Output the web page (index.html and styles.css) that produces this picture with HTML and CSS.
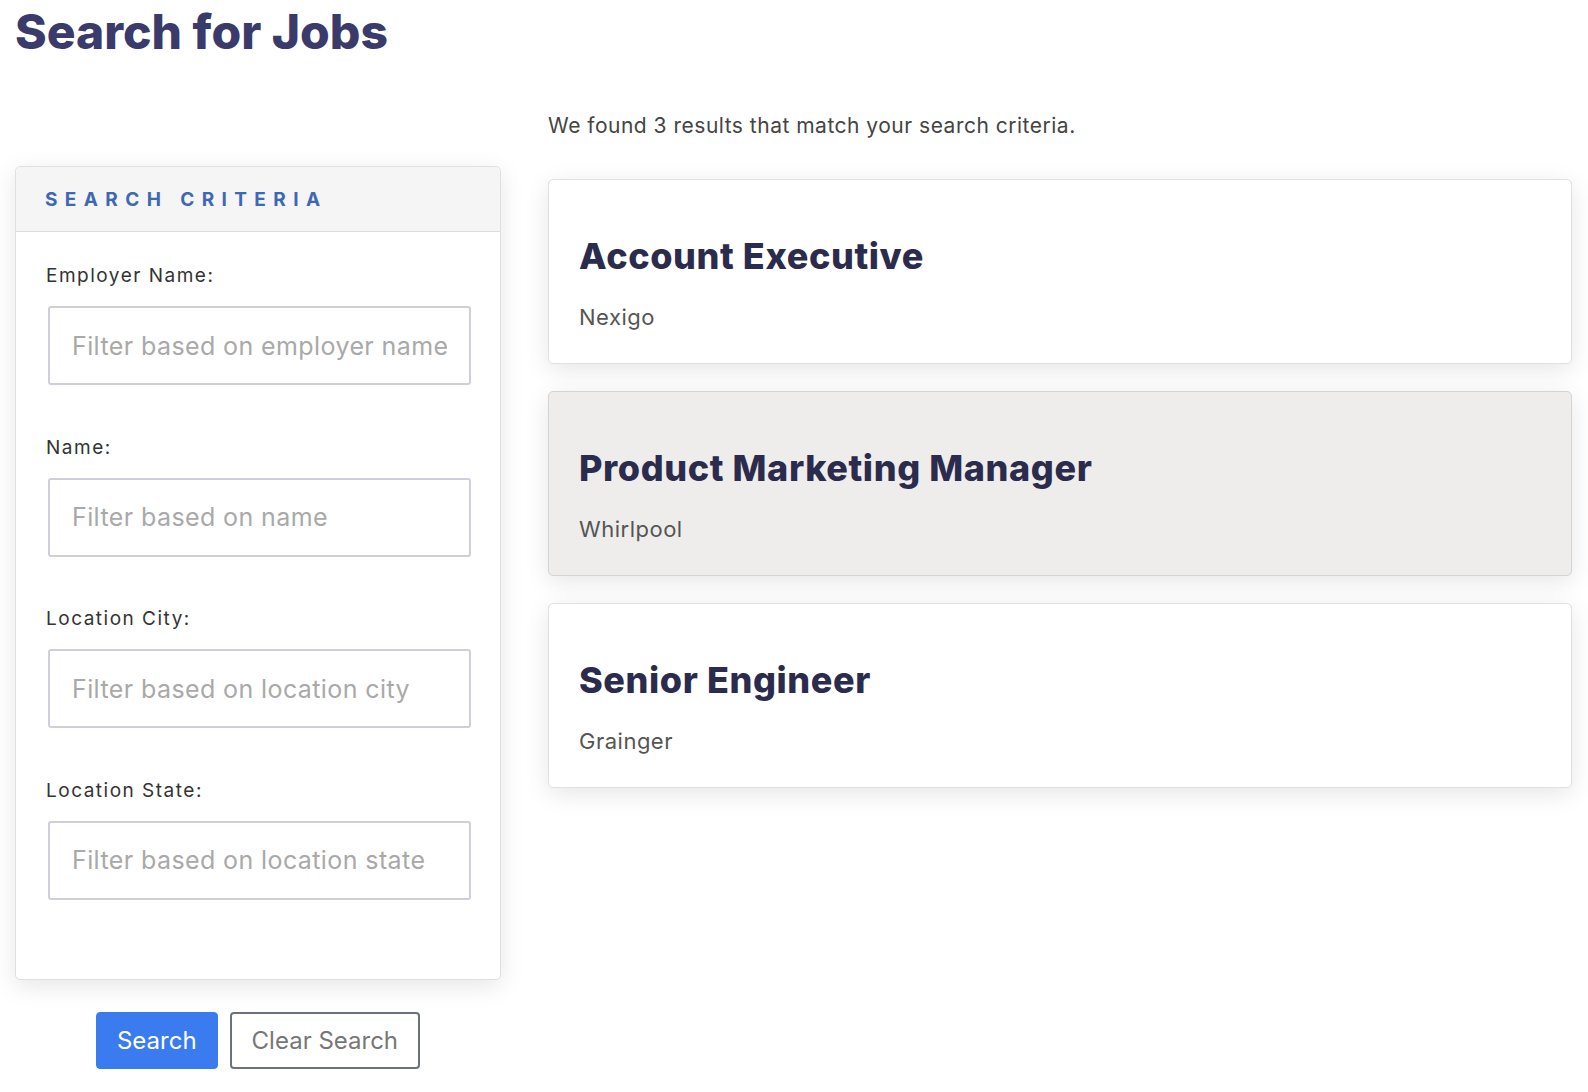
FILE: index.html
```html
<!DOCTYPE html>
<html lang="en">
<head>
  <meta charset="UTF-8">
  <meta name="viewport" content="width=device-width, initial-scale=1.0">
  <link rel="stylesheet" href="styles.css">
  <title>Search for Jobs</title>
</head>
<body>

  <div class="page">
    <h1 class="page-title">Search for Jobs</h1>

    <div class="layout">
      <div class="side">
        <div class="criteria-card">
          <div class="criteria-header">Search Criteria</div>
          <div class="criteria-body">
            <div class="field">
              <label for="employer">Employer Name:</label>
              <input type="text" id="employer" placeholder="Filter based on employer name">
            </div>
            <div class="field">
              <label for="name">Name:</label>
              <input type="text" id="name" placeholder="Filter based on name">
            </div>
            <div class="field">
              <label for="city">Location City:</label>
              <input type="text" id="city" placeholder="Filter based on location city">
            </div>
            <div class="field">
              <label for="state">Location State:</label>
              <input type="text" id="state" placeholder="Filter based on location state">
            </div>
          </div>
        </div>

        <div class="actions">
          <button class="btn btn-primary">Search</button>
          <button class="btn btn-outline">Clear Search</button>
        </div>
      </div>

      <div class="results">
        <p class="results-count">We found 3 results that match your search criteria.</p>

        <div class="job-card">
          <h2 class="job-title">Account Executive</h2>
          <p class="job-company">Nexigo</p>
        </div>

        <div class="job-card active">
          <h2 class="job-title">Product Marketing Manager</h2>
          <p class="job-company">Whirlpool</p>
        </div>

        <div class="job-card">
          <h2 class="job-title">Senior Engineer</h2>
          <p class="job-company">Grainger</p>
        </div>
      </div>
    </div>
  </div>

</body>
</html>
```

FILE: styles.css
```css
body {
  margin: 0;
  background-color: #ffffff;
  font-family: Inter, "Noto Sans", sans-serif;
  color: #333;
}

.page {
  padding: 0 16px 0 15px;
}

.page-title {
  margin: 0;
  padding-top: 4px;
  font-size: 48px;
  line-height: 56px;
  font-weight: 800;
  color: #3a3a6b;
}

.layout {
  display: grid;
  grid-template-columns: 486px 1fr;
  column-gap: 47px;
}

.side {
  margin-top: 106px;
}

.criteria-card {
  background-color: #fff;
  border: 1px solid #e0e0e0;
  border-radius: 5px;
  box-shadow: 0 6px 24px rgba(0, 0, 0, 0.1);
}

.criteria-header {
  height: 64px;
  padding-left: 29px;
  display: flex;
  align-items: center;
  background-color: #f5f5f5;
  border-bottom: 1px solid #dcdcdc;
  border-radius: 5px 5px 0 0;
  text-transform: uppercase;
  letter-spacing: 7.4px;
  font-size: 19px;
  font-weight: 700;
  color: #3d68b5;
}

.criteria-body {
  padding: 30px 30px 31px 30px;
}

.field {
  margin-bottom: 48.5px;
}

.field label {
  display: block;
  font-size: 19px;
  line-height: 28px;
  letter-spacing: 1.5px;
  color: #333;
  margin-bottom: 16px;
}

.field input {
  display: block;
  box-sizing: border-box;
  width: 423px;
  height: 79px;
  margin-left: 2px;
  padding: 0 22px;
  border: 2px solid #cfcfdc;
  border-radius: 3px;
  font-family: inherit;
  font-size: 25px;
  letter-spacing: 0.4px;
  color: #333;
}

.field input::placeholder {
  color: #a9a9a9;
}

.actions {
  display: flex;
  justify-content: center;
  gap: 12px;
  margin-top: 32px;
}

.btn {
  height: 57px;
  padding: 0 20px;
  border-radius: 4px;
  font-family: inherit;
  font-size: 24px;
  cursor: pointer;
}

.btn-primary {
  background-color: #3a7bf0;
  border: 1px solid #3a7bf0;
  color: #fff;
}

.btn-outline {
  background-color: #fff;
  border: 2px solid #6c727b;
  color: #777;
}

.results-count {
  margin: 0;
  padding-top: 53px;
  font-size: 21px;
  line-height: 26px;
  letter-spacing: 0.5px;
  color: #444;
}

.job-card {
  box-sizing: border-box;
  height: 185px;
  margin-top: 27px;
  padding: 53px 30px 0 30px;
  background-color: #fff;
  border: 1px solid #e0e0e0;
  border-radius: 5px;
  box-shadow: 0 6px 24px rgba(0, 0, 0, 0.1);
}

.results-count + .job-card {
  margin-top: 40px;
}

.job-card.active {
  background-color: #eeedeb;
  border-color: #d6d4d2;
}

.job-title {
  margin: 0;
  font-size: 36px;
  line-height: 46px;
  letter-spacing: 0.6px;
  font-weight: 800;
  color: #2b2b4d;
}

.job-company {
  margin: 24px 0 0 0;
  font-size: 22px;
  line-height: 28px;
  letter-spacing: 0.5px;
  color: #555;
}
```
